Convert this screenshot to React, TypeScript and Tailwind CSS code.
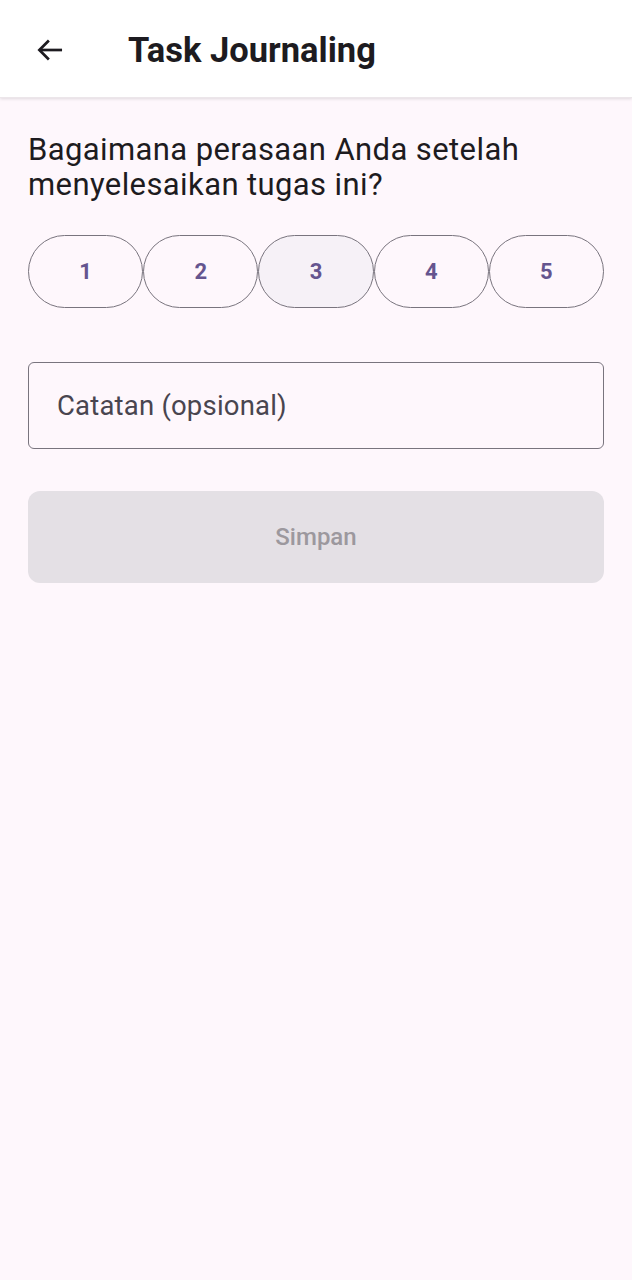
import React from "react";

export default function App() {
  const nums = [1, 2, 3, 4, 5];
  return (
    <div className="min-h-[1280px] w-full bg-[#fef7fc]" style={{ fontFamily: "Roboto, 'Noto Sans', sans-serif" }}>
      <header className="h-[98px] bg-white flex items-center shadow-[0_1px_3px_rgba(0,0,0,0.12)] border-b border-[#ece6ea]">
        <div className="w-[100px] flex justify-center pt-[2px]">
          <svg width="34" height="34" viewBox="0 0 24 24" fill="none" stroke="#1d1b20" strokeWidth="1.9">
            <path d="M20.5 12H4.5" />
            <path d="M11.2 5.3 4.5 12l6.7 6.7" strokeLinejoin="miter" />
          </svg>
        </div>
        <h1 className="ml-[28px] pt-[4px] text-[34.5px] font-bold text-[#1d1b20] leading-none">Task Journaling</h1>
      </header>
      <main className="px-[28px] pt-[34px]">
        <p className="text-[31px] leading-[35px] tracking-[0.4px] text-[#1d1b20]">
          Bagaimana perasaan Anda setelah menyelesaikan tugas ini?
        </p>
        <div className="mt-[33px] flex">
          {nums.map((n) => (
            <button
              key={n}
              className={`flex-1 h-[73px] rounded-full border-[1.5px] border-[#79747e] flex items-center justify-center text-[22px] font-bold text-[#65558f] ${n === 3 ? "bg-[#f6f1f7]" : "bg-[#fef7fc]"}`}
            >
              {n}
            </button>
          ))}
        </div>
        <div className="mt-[54px] h-[87px] rounded-[6px] border-[1.5px] border-[#79747e] flex items-center pl-[28px]">
          <span className="text-[27.5px] tracking-[0.2px] text-[#49454f]">Catatan (opsional)</span>
        </div>
        <button className="mt-[42px] w-full h-[92px] rounded-[12px] bg-[#e4e0e5] flex items-center justify-center text-[24px] font-medium text-[#9c989e]">
          Simpan
        </button>
      </main>
    </div>
  );
}
